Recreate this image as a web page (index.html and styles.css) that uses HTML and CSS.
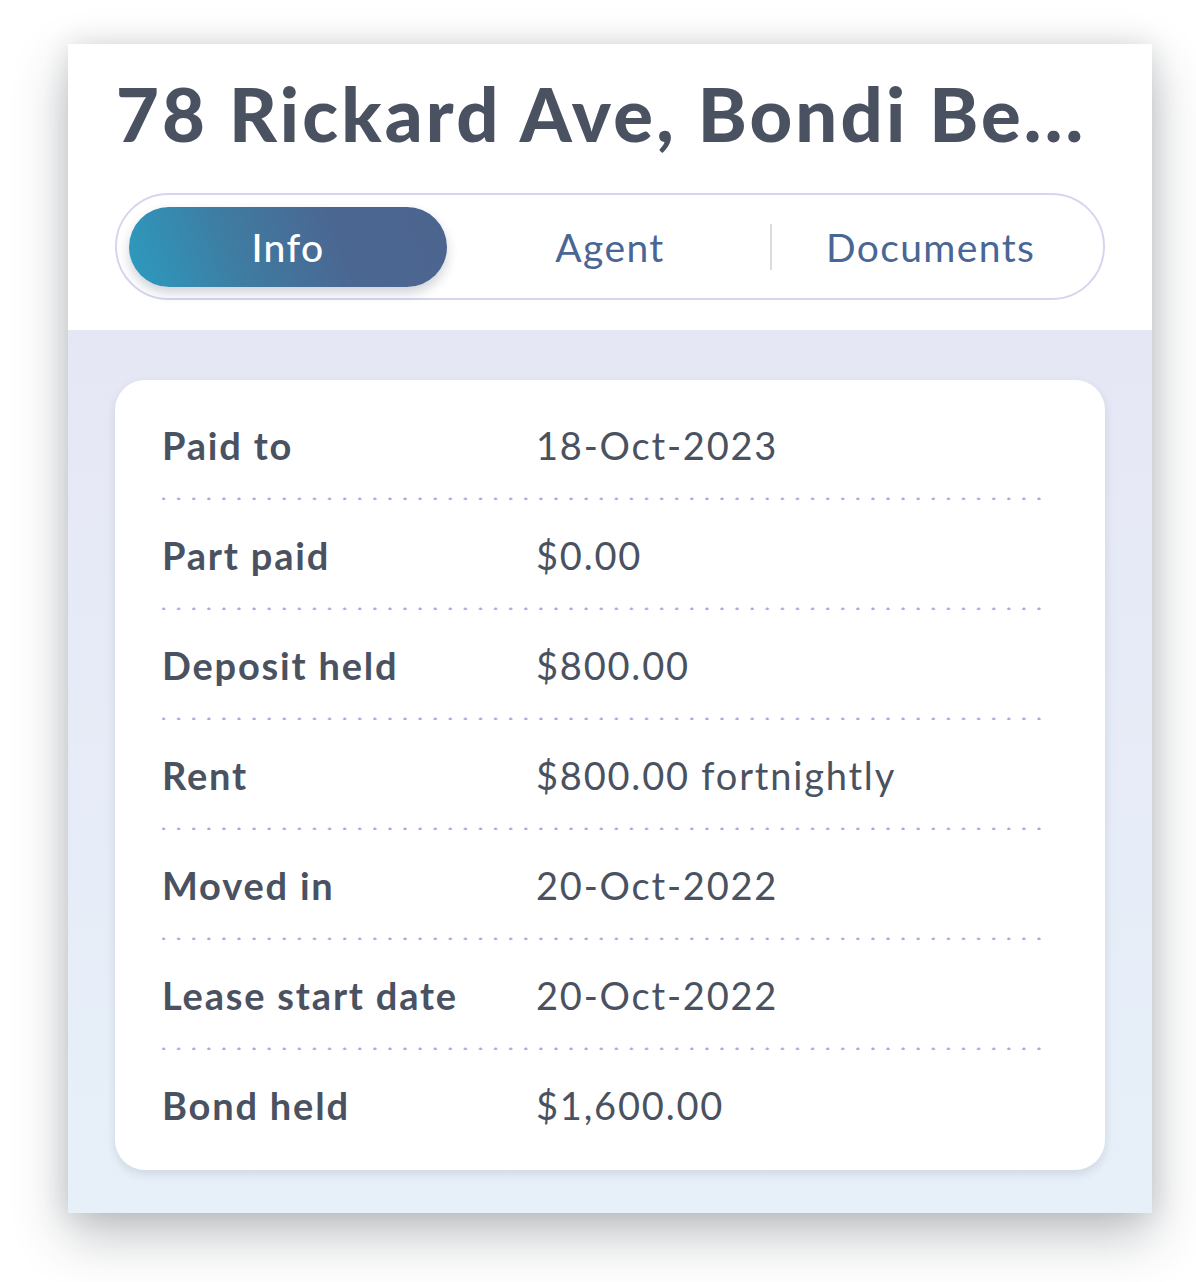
FILE: index.html
```html
<!DOCTYPE html>
<html lang="en">
<head>
<meta charset="utf-8">
<title>78 Rickard Ave, Bondi Beach</title>
<link rel="stylesheet" href="styles.css">
</head>
<body>
<div class="panel">
  <header class="head">
    <h1 class="title">78 Rickard Ave, Bondi Be...</h1>
    <nav class="tabs">
      <span class="tab active">Info</span>
      <span class="tab">Agent</span>
      <span class="tab divided">Documents</span>
    </nav>
  </header>
  <section class="body">
    <div class="card">
      <div class="row"><span class="label">Paid to</span><span class="value">18-Oct-2023</span></div>
      <div class="row"><span class="label">Part paid</span><span class="value">$0.00</span></div>
      <div class="row"><span class="label">Deposit held</span><span class="value">$800.00</span></div>
      <div class="row"><span class="label">Rent</span><span class="value">$800.00 fortnightly</span></div>
      <div class="row"><span class="label">Moved in</span><span class="value">20-Oct-2022</span></div>
      <div class="row"><span class="label">Lease start date</span><span class="value">20-Oct-2022</span></div>
      <div class="row last"><span class="label">Bond held</span><span class="value">$1,600.00</span></div>
    </div>
  </section>
</div>
</body>
</html>
```
FILE: styles.css
```css
html, body {
  margin: 0;
  padding: 0;
  background: #ffffff;
}
body {
  font-family: "Lato", "Noto Sans", sans-serif;
  color: #4a5261;
  min-height: 1282px;
  padding-top: 44px;
  padding-bottom: 69px;
  box-sizing: border-box;
}
.panel {
  width: 1084px;
  margin: 0 0 0 68px;
  background: #ffffff;
  box-shadow: 0 22px 50px rgba(40, 50, 60, 0.3), 0 0 24px rgba(40, 50, 60, 0.12);
}
.head {
  height: 286px;
  padding: 0 47px;
  box-sizing: border-box;
  background: #ffffff;
  display: flex;
  flex-direction: column;
}
.title {
  margin: 0;
  padding-top: 30px;
  height: 149px;
  flex: none;
  box-sizing: border-box;
  font-size: 74px;
  font-weight: 900;
  line-height: 80px;
  letter-spacing: 3.2px;
  white-space: nowrap;
  overflow: hidden;
  color: #4a5261;
  padding-left: 1px;
}
.tabs {
  height: 107px;
  flex: none;
  box-sizing: border-box;
  border: 2px solid #d6d5f0;
  border-radius: 54px;
  padding: 12px;
  display: grid;
  grid-template-columns: 1fr 1fr 1fr;
  align-items: center;
}
.tab {
  height: 80px;
  display: flex;
  align-items: center;
  justify-content: center;
  font-size: 39px;
  letter-spacing: 1.4px;
  color: #4a6694;
  position: relative;
}
.tab.active {
  width: 318px;
  border-radius: 40px;
  color: #ffffff;
  font-weight: 500;
  background: linear-gradient(70deg, #2c9bc0 0%, #3f7ba1 35%, #4a6792 65%, #4c658f 100%);
  box-shadow: 0 6px 12px rgba(40, 50, 80, 0.22);
}
.tab.divided::before {
  content: "";
  position: absolute;
  left: 0;
  top: 17px;
  height: 46px;
  width: 2px;
  background: #dcdcdc;
}
.body {
  background: linear-gradient(180deg, #e6e7f5 0%, #e7f0f9 100%);
  padding: 50px 47px 43px;
}
.card {
  background: #ffffff;
  border-radius: 30px;
  padding: 10px 57px 10px 47px;
  box-shadow: 0 4px 10px rgba(60, 70, 90, 0.14);
}
.row {
  height: 110px;
  display: flex;
  align-items: center;
  font-size: 38px;
  letter-spacing: 1.8px;
  background-image: radial-gradient(circle, #a8a8e0 1.3px, transparent 1.8px);
  background-size: 15.1px 4px;
  background-repeat: repeat-x;
  background-position: -6px calc(100% + 1px);
}
.row.last {
  background-image: none;
}
.label {
  width: 374px;
  flex: none;
  font-weight: 700;
}
.value {
  font-weight: 400;
  letter-spacing: 1.8px;
}
```
